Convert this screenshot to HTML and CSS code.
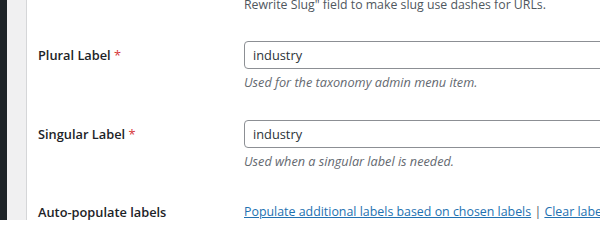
FILE: index.html
```html
<!DOCTYPE html>
<html lang="en">
<head>
<meta charset="utf-8">
<title>Taxonomy labels</title>
<link rel="stylesheet" href="styles.css">
</head>
<body>
<div class="page">
  <div class="adminmenu"></div>
  <div class="gutter"></div>
  <main class="content">
    <p class="intro">Rewrite Slug" field to make slug use dashes for URLs.</p>
    <div class="row">
      <label class="label" for="plural">Plural Label <span class="req">*</span></label>
      <div class="field">
        <input class="text-input" id="plural" type="text" value="industry">
        <p class="desc">Used for the taxonomy admin menu item.</p>
      </div>
    </div>
    <div class="row row-second">
      <label class="label" for="singular">Singular Label <span class="req">*</span></label>
      <div class="field">
        <input class="text-input" id="singular" type="text" value="industry">
        <p class="desc">Used when a singular label is needed.</p>
      </div>
    </div>
    <div class="row row-third">
      <div class="label label-plain">Auto-populate labels</div>
      <div class="field links"><a href="#">Populate additional labels based on chosen labels</a> <span class="sep">|</span> <a href="#">Clear labels</a></div>
    </div>
  </main>
</div>
</body>
</html>
```
FILE: styles.css
```css
html, body {
  margin: 0;
  padding: 0;
  background: #ffffff;
  overflow: hidden;
}
body {
  font-family: "Segoe UI", "Open Sans", "Noto Sans", sans-serif;
  color: #1d2327;
  font-size: 13px;
}
.page {
  display: flex;
  height: 220px;
}
.adminmenu {
  width: 7px;
  background: #1d2327;
  flex: none;
}
.gutter {
  width: 19px;
  background: #f0f0f1;
  border-right: 1px solid #d5d6d8;
  flex: none;
}
.content {
  flex: 1;
  padding-left: 11px;
  min-width: 0;
}
.intro {
  margin: -5px 0 0 206px;
  line-height: 20px;
  color: #50575e;
  font-size: 12.3px;
  white-space: nowrap;
}
.row {
  display: grid;
  grid-template-columns: 206px 1fr;
  margin-top: 26px;
}
.row-second { margin-top: 29px; }
.row-third { margin-top: 33px; }
.label {
  font-size: 12.8px;
  font-weight: 600;
  line-height: 28px;
  white-space: nowrap;
}
.label-plain { line-height: 18px; }
.req { color: #d63638; font-weight: 400; }
.field { min-width: 0; }
.text-input {
  display: block;
  box-sizing: border-box;
  width: 400px;
  height: 28px;
  margin: 0;
  padding: 0 8px;
  border: 1px solid #8c8f94;
  border-radius: 4px;
  font-family: inherit;
  font-size: 12.8px;
  color: #2c3338;
  background: #fff;
}
.desc {
  margin: 4px 0 0;
  line-height: 18px;
  font-size: 12.7px;
  font-style: italic;
  color: #646970;
  white-space: nowrap;
}
.links {
  font-size: 12.4px;
  line-height: 18px;
  white-space: nowrap;
}
.links a { color: #2271b1; text-decoration: underline; }
.sep { color: #50575e; }
```
